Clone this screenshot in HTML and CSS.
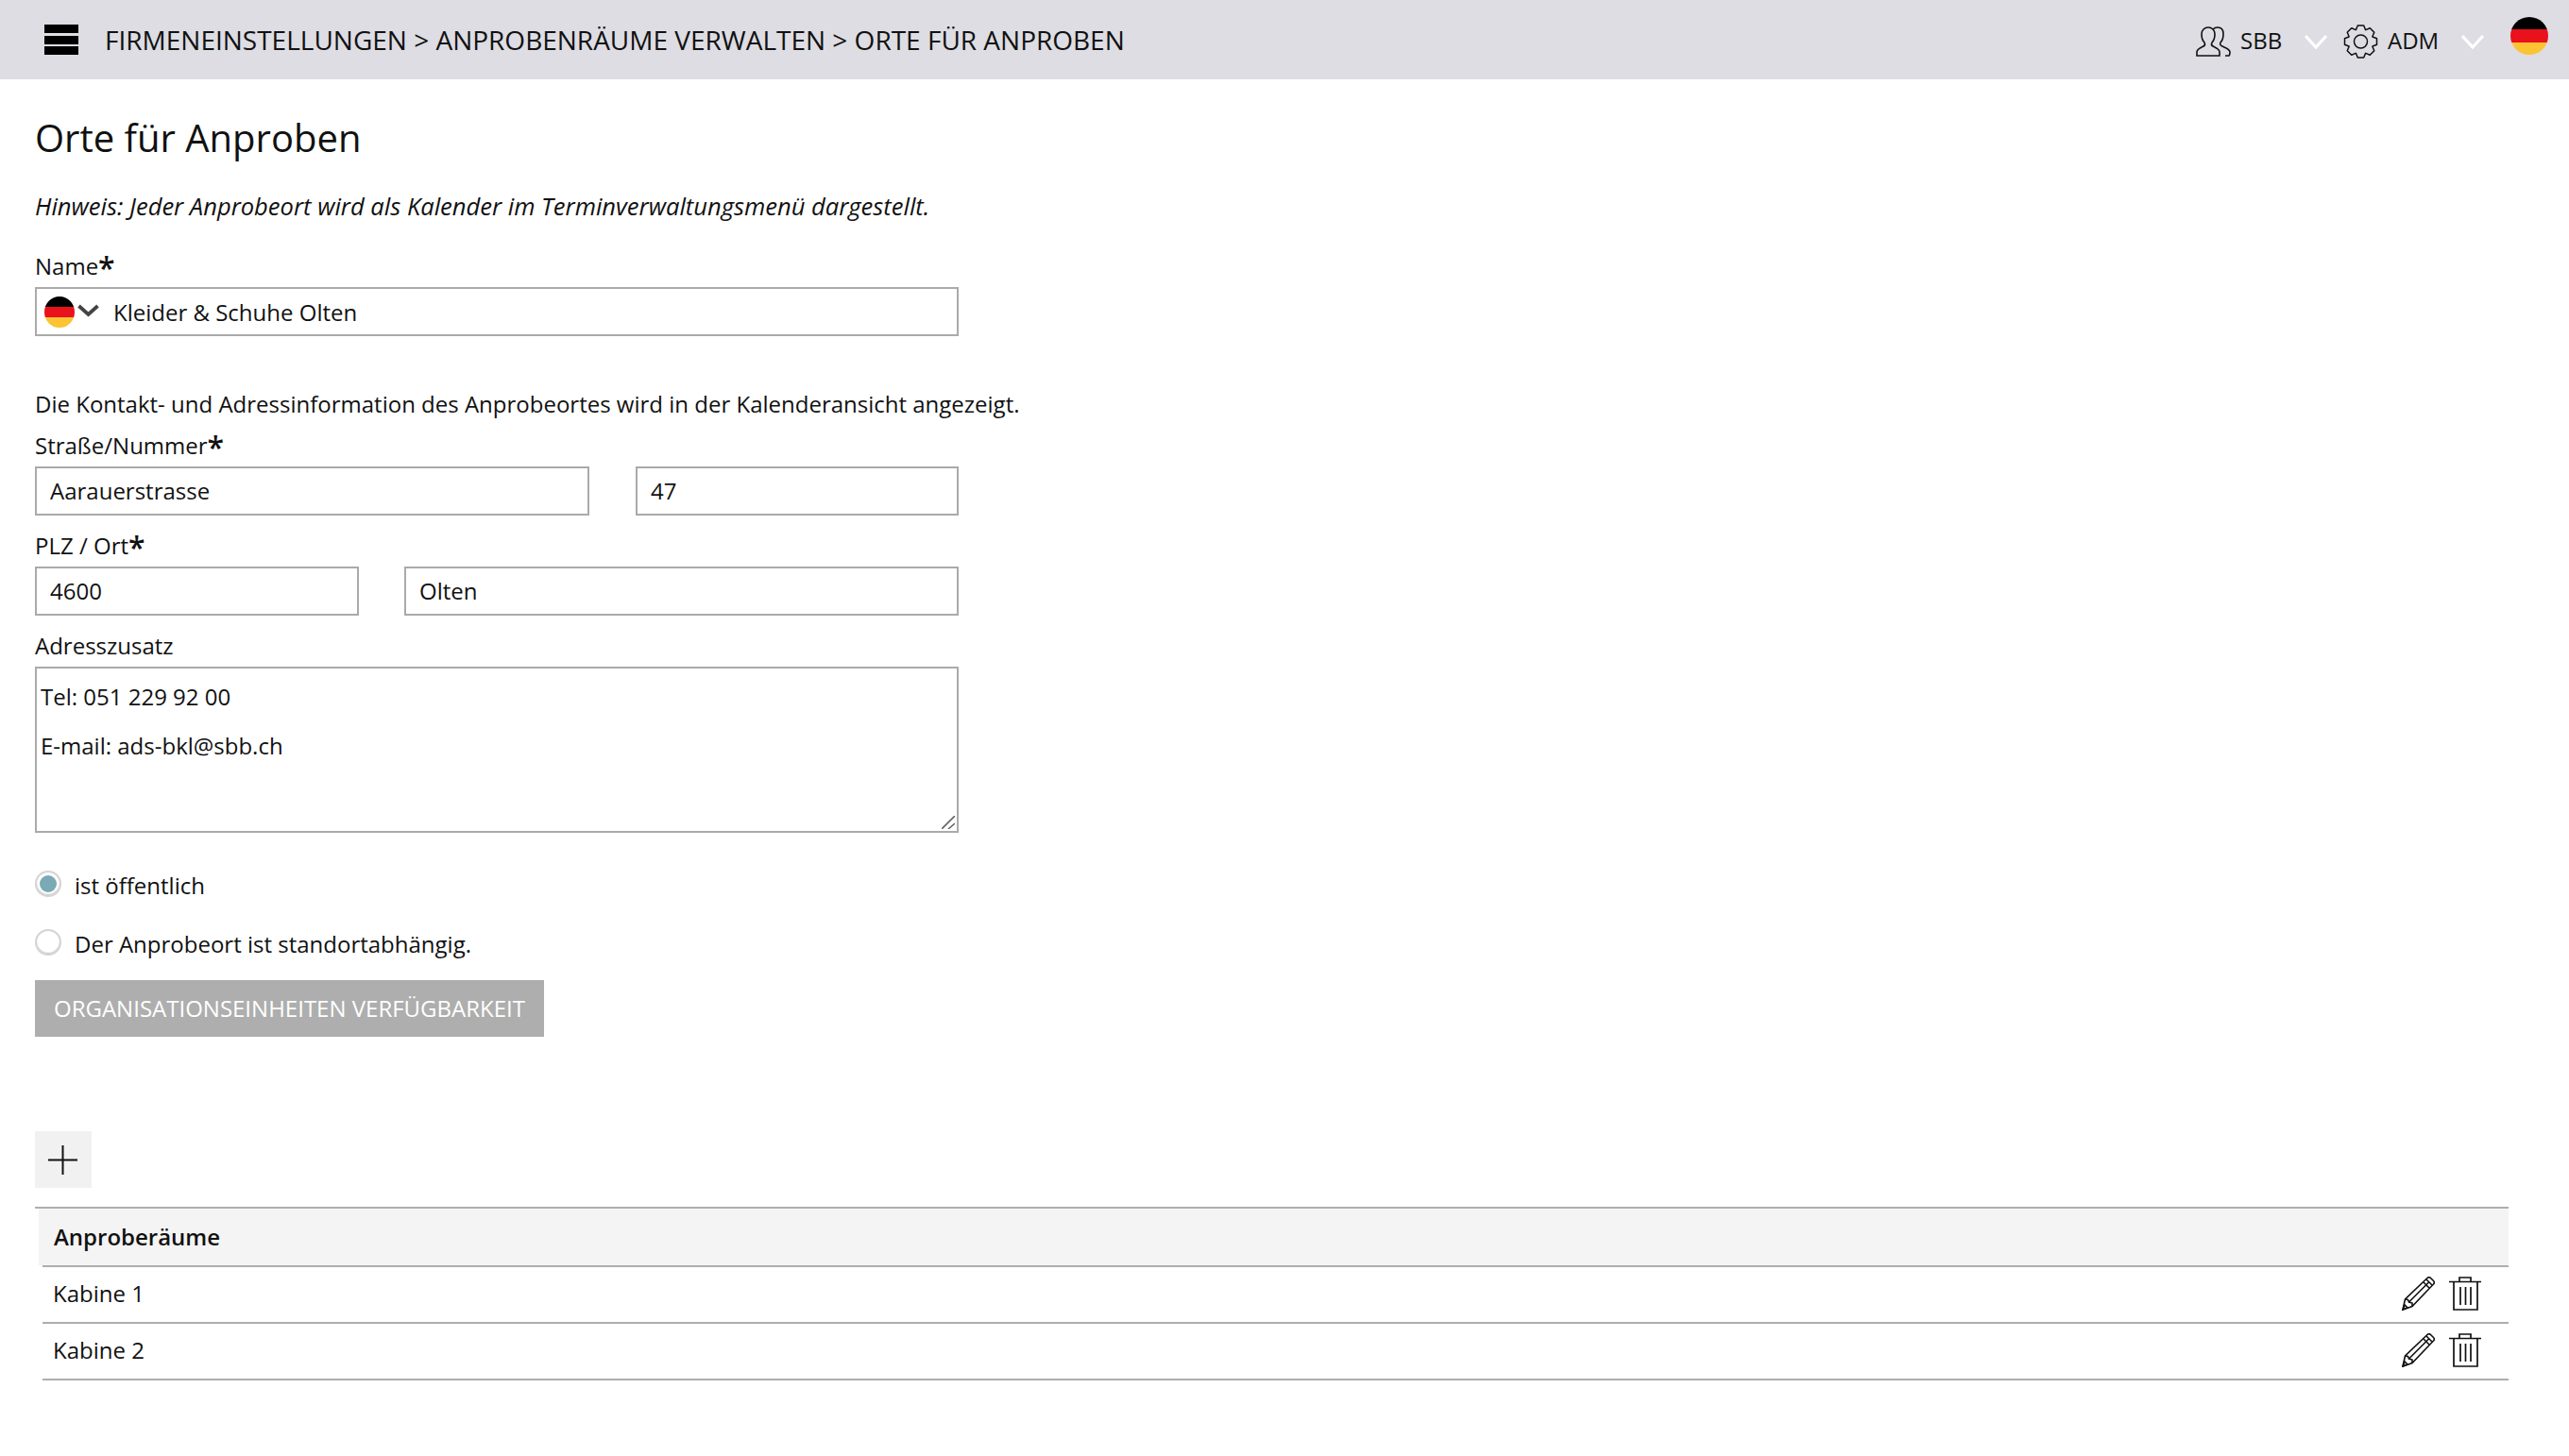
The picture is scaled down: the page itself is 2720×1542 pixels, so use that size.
FILE: index.html
```html
<!DOCTYPE html>
<html lang="de">
<head>
<meta charset="utf-8">
<title>Orte für Anproben</title>
<link rel="stylesheet" href="styles.css">
</head>
<body>
<header class="topbar">
  <div class="menu-icon"><span></span><span></span><span></span></div>
  <div class="crumbs">FIRMENEINSTELLUNGEN &gt; ANPROBENRÄUME VERWALTEN &gt; ORTE FÜR ANPROBEN</div>
  <div class="top-item top-sbb">
    <svg class="ico-users" viewBox="0 0 37 32" fill="none" stroke="#111" stroke-width="1.6"><path d="M1 31v-4c0-3 3-4 7-6 2-1 2-2 1-4-2-2-3-5-3-9 0-4 3-7 7-7s7 3 7 7c0 4-1 7-3 9-1 2-1 3 1 4 4 2 7 3 7 6v4z"/><path d="M18 3c1-1 3-2 5-2 4 0 6 3 6 7s-1 7-3 9c-1 2 0 3 2 4 4 2 8 3 8 6 0 2 0 3-1 4h-4"/></svg>
    <span>SBB</span>
    <svg class="ico-chev" viewBox="0 0 24 16" fill="none" stroke="#fff" stroke-width="3.2"><path d="M1 2l11 12L23 2"/></svg>
  </div>
  <div class="top-item top-adm">
    <svg class="ico-gear" viewBox="-18.500 -18 37 36" fill="none" stroke="#111" stroke-width="1.5"><circle r="7"/><path stroke-linejoin="round" d="M-5-12.500L-3.200-17H3.200L5-12.500L5.300-12.370L9.760-14.280L14.280-9.760L12.370-5.300L12.500-5L17-3.200V3.200L12.500 5L12.370 5.300L14.280 9.760L9.760 14.280L5.300 12.370L5 12.500L3.200 17H-3.200L-5 12.500L-5.300 12.370L-9.760 14.280L-14.280 9.760L-12.370 5.300L-12.500 5L-17 3.200V-3.200L-12.500-5L-12.370-5.300L-14.280-9.760L-9.760-14.280L-5.300-12.370Z"/></svg>
    <span>ADM</span>
    <svg class="ico-chev" viewBox="0 0 24 16" fill="none" stroke="#fff" stroke-width="3.2"><path d="M1 2l11 12L23 2"/></svg>
  </div>
  <div class="flag flag-top"><i class="f-b"></i><i class="f-r"></i><i class="f-g"></i></div>
</header>
<main class="content">
  <h1 class="title">Orte für Anproben</h1>
  <p class="hint">Hinweis: Jeder Anprobeort wird als Kalender im Terminverwaltungsmenü dargestellt.</p>
  <section class="form">
    <label class="lbl lbl-name">Name<b>*</b></label>
    <div class="box name-box">
      <div class="flag flag-name"><i class="f-b"></i><i class="f-r"></i><i class="f-g"></i></div>
      <svg class="ico-chev-dark" viewBox="0 0 24 14" fill="none" stroke="#444" stroke-width="3.8"><path d="M2 2l10 9L22 2"/></svg>
      <input class="bare" value="Kleider &amp; Schuhe Olten">
    </div>
    <p class="para">Die Kontakt- und Adressinformation des Anprobeortes wird in der Kalenderansicht angezeigt.</p>
    <label class="lbl lbl-street">Straße/Nummer<b>*</b></label>
    <div class="row">
      <input class="box field w-street" value="Aarauerstrasse">
      <input class="box field w-num" value="47">
    </div>
    <label class="lbl lbl-next">PLZ / Ort<b>*</b></label>
    <div class="row">
      <input class="box field w-zip" value="4600">
      <input class="box field w-city" value="Olten">
    </div>
    <label class="lbl lbl-next">Adresszusatz</label>
    <div class="area-wrap">
      <textarea class="box area">Tel: 051 229 92 00

E-mail: ads-bkl@sbb.ch</textarea>
      <svg class="grip" viewBox="0 0 14 14" fill="none" stroke="#666" stroke-width="1.600"><path d="M0 14L14 0M7 14l7-6"/></svg>
    </div>
    <div class="radio radio-1"><span class="dot on"></span><span class="radio-text">ist öffentlich</span></div>
    <div class="radio radio-2"><span class="dot"></span><span class="radio-text">Der Anprobeort ist standortabhängig.</span></div>
    <button class="btn">ORGANISATIONSEINHEITEN VERFÜGBARKEIT</button>
  </section>
  <button class="add"><svg viewBox="0 0 31 31" fill="none" stroke="#111" stroke-width="2"><path d="M15.500 0v31M0 15.500h31"/></svg></button>
  <section class="table">
    <div class="thead"><div class="th">Anproberäume</div></div>
    <div class="tr">
      <span class="td">Kabine 1</span>
      <svg class="ico-pen" viewBox="0 0 35 36" fill="none" stroke="#111" stroke-width="1.6"><path d="M1 35l2.500-11L27 1.500c1-1 2.500-1 3.500 0l3 3c1 1 1 2.500 0 3.500L11 31.500z"/><path d="M3.500 24l3 .5 1 2.500 3.500 1v3.500M7.500 27L28.500 6M23 6l6 6M26 3l6 6M1 35l2-5 3 3z"/></svg>
      <svg class="ico-trash" viewBox="0 0 34 36" fill="none" stroke="#111" stroke-width="1.7"><path d="M0 5.500h34M11 5V1h12v4M5 6v29h25V6M12 11v19M17.500 11v19M23 11v19"/></svg>
    </div>
    <div class="tr">
      <span class="td">Kabine 2</span>
      <svg class="ico-pen" viewBox="0 0 35 36" fill="none" stroke="#111" stroke-width="1.6"><path d="M1 35l2.500-11L27 1.500c1-1 2.500-1 3.500 0l3 3c1 1 1 2.500 0 3.500L11 31.500z"/><path d="M3.500 24l3 .5 1 2.500 3.500 1v3.500M7.500 27L28.500 6M23 6l6 6M26 3l6 6M1 35l2-5 3 3z"/></svg>
      <svg class="ico-trash" viewBox="0 0 34 36" fill="none" stroke="#111" stroke-width="1.7"><path d="M0 5.500h34M11 5V1h12v4M5 6v29h25V6M12 11v19M17.500 11v19M23 11v19"/></svg>
    </div>
  </section>
</main>
</body>
</html>
```
FILE: styles.css
```css
* { box-sizing: border-box; }
html, body { margin: 0; padding: 0; background: #fff; }
body { font-family: "Open Sans", "Noto Sans", sans-serif; font-size: 24px; line-height: 32px; color: #111; }

.topbar { height: 84px; background: #dddde3; display: flex; align-items: center; padding-left: 47px; }
.menu-icon { width: 36px; height: 32px; display: flex; flex-direction: column; justify-content: space-between; }
.menu-icon span { display: block; height: 9px; background: #000; }
.crumbs { margin-left: 28px; font-size: 28px; flex: 1; }
.top-item { display: flex; align-items: center; font-size: 24px; }
.top-item span { margin-left: 10px; padding-top: 2px; }
.ico-users { width: 37px; height: 32px; display: block; margin-top: 4px; }
.ico-gear { width: 37px; height: 36px; display: block; margin-top: 4px; }
.ico-chev { width: 24px; height: 16px; display: block; margin-top: 4px; }
.top-sbb { width: 156px; }
.top-sbb .ico-chev { margin-left: 24px; }
.top-adm { width: 177px; }
.top-adm .ico-chev { margin-left: 24px; }
.flag { border-radius: 50%; overflow: hidden; display: flex; flex-direction: column; }
.flag i { display: block; flex: 1; }
.f-b { background: #000; }
.f-r { background: #e8111c; }
.f-g { background: #fcc433; }
.flag-top { width: 40px; height: 40px; margin-right: 22px; margin-bottom: 8px; }
.flag-name { width: 32px; height: 33px; flex: none; }

.content { padding: 0 64px 0 37px; }
.title { margin: 35px 0 0; font-size: 40px; line-height: 54px; font-weight: 400; }
.hint { margin: 29px 0 0; font-style: italic; font-size: 25.55px; }
.form { width: 978px; }
.lbl { display: block; height: 32px; margin-bottom: 6px; }
.lbl b { font-weight: 600; font-size: 32px; line-height: 0; vertical-align: -5px; }
.lbl-name { margin-top: 32px; }
.lbl-street { margin-top: 12px; }
.lbl-next { margin-top: 16px; }
.box { border: 2px solid #aaa; background: #fff; height: 52px; }
.name-box { display: flex; align-items: center; padding-left: 8px; }
.ico-chev-dark { width: 25px; height: 14px; margin-left: 2px; margin-top: -3px; flex: none; }
.bare { border: 0; outline: 0; padding: 2px 0 0; margin-left: 14px; flex: 1; font: inherit; color: #111; background: transparent; }
.para { margin: 56px 0 0; white-space: nowrap; }
.row { display: flex; justify-content: space-between; }
.field { font: inherit; color: #111; padding: 0 14px 2px; border-radius: 0; outline: 0; }
.w-street { width: 587px; }
.w-num { width: 342px; }
.w-zip { width: 343px; }
.w-city { width: 587px; }
.area-wrap { position: relative; height: 176px; }
.area { display: block; width: 978px; height: 176px; font: inherit; line-height: 26px; color: #111; padding: 17px 4px; border-radius: 0; outline: 0; resize: none; }
.grip { position: absolute; right: 4px; bottom: 4px; width: 14px; height: 14px; }
.radio { display: flex; align-items: center; height: 28px; }
.radio-1 { margin-top: 40px; }
.radio-2 { margin-top: 34px; }
.radio-text { padding-top: 4px; }
.dot { width: 28px; height: 28px; border-radius: 50%; background: #fff; border: 2px solid #d4d4d4; box-shadow: inset 0 -1px 1px #c4c4c4; margin-right: 14px; flex: none; display: flex; align-items: center; justify-content: center; }
.dot.on::after { content: ""; width: 18px; height: 18px; border-radius: 50%; background: #7ba9b6; }
.btn { display: block; margin-top: 26px; width: 539px; height: 60px; border: 0; background: #aeaeae; color: #fff; font: inherit; padding: 0; }
.add { display: block; margin-top: 100px; width: 60px; height: 60px; border: 0; background: #f1f1f1; padding: 14px; }
.add svg { display: block; width: 31px; height: 31px; }

.table { margin-top: 20px; }
.thead { border-top: 2px solid #aeaeae; }
.th { margin-left: 4px; height: 60px; background: #f4f4f4; padding: 0 0 0 16px; display: flex; align-items: center; font-weight: 600; }
.tr { margin-left: 8px; height: 60px; border-top: 2px solid #aeaeae; display: flex; align-items: center; padding: 0 29px 2px 11px; }
.tr:last-child { height: 62px; border-bottom: 2px solid #aeaeae; }
.td { flex: 1; }
.ico-pen { width: 35px; height: 36px; display: block; }
.ico-trash { width: 34px; height: 36px; display: block; margin-left: 15px; }
```
